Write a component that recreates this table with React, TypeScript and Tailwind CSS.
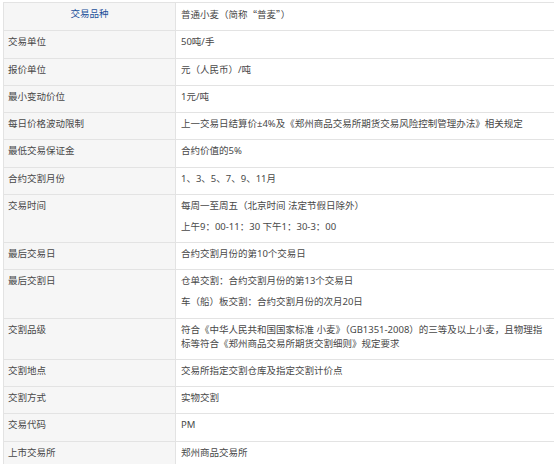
import React from "react";

type Row = { k: string; v: string[] };

const rows: Row[] = [
  { k: "交易单位", v: ["50吨/手"] },
  { k: "报价单位", v: ["元（人民币）/吨"] },
  { k: "最小变动价位", v: ["1元/吨"] },
  { k: "每日价格波动限制", v: ["上一交易日结算价±4%及《郑州商品交易所期货交易风险控制管理办法》相关规定"] },
  { k: "最低交易保证金", v: ["合约价值的5%"] },
  { k: "合约交割月份", v: ["1、3、5、7、9、11月"] },
  { k: "交易时间", v: ["每周一至周五（北京时间 法定节假日除外）", "上午9：00-11：30 下午1：30-3：00"] },
  { k: "最后交易日", v: ["合约交割月份的第10个交易日"] },
  { k: "最后交割日", v: ["仓单交割：合约交割月份的第13个交易日", "车（船）板交割：合约交割月份的次月20日"] },
  { k: "交割品级", v: ["符合《中华人民共和国国家标准 小麦》（GB1351-2008）的三等及以上小麦，且物理指标等符合《郑州商品交易所期货交割细则》规定要求"] },
  { k: "交割地点", v: ["交易所指定交割仓库及指定交割计价点"] },
  { k: "交割方式", v: ["实物交割"] },
  { k: "交易代码", v: ["PM"] },
  { k: "上市交易所", v: ["郑州商品交易所"] },
];

export default function App() {
  return (
    <div
      className="w-[554px] h-[464px] overflow-hidden bg-white pt-[2px] pl-[3px]"
      style={{ fontFamily: '"Noto Sans", "Noto Sans CJK SC", sans-serif' }}
    >
      <table className="border-collapse w-[560px] text-[9.5px] leading-[14px] text-[#484848]">
        <tbody>
          <tr>
            <td className="w-[172px] bg-[#f6f6f6] border border-[#e3e3e3] px-[4px] pt-[4px] pb-[8.25px] text-center text-[#22509a] align-top">
              交易品种
            </td>
            <td className="border border-[#e3e3e3] pl-[5px] pr-[15px] pt-[4px] pb-[8.25px] align-top">
              <span style={{ fontFamily: '"Noto Sans CJK SC", sans-serif' }}>普通小麦（简称“普麦”）</span>
            </td>
          </tr>
          {rows.map((r) => (
            <tr key={r.k}>
              <td className="w-[172px] bg-[#f6f6f6] border border-[#e3e3e3] px-[4px] pt-[4px] pb-[8.25px] align-top">
                {r.k}
              </td>
              <td className="border border-[#e3e3e3] pl-[5px] pr-[15px] pt-[4px] pb-[8.25px] align-top">
                <div className="flex flex-col gap-[7px]">
                  {r.v.map((t) => (
                    <p key={t}>{t}</p>
                  ))}
                </div>
              </td>
            </tr>
          ))}
        </tbody>
      </table>
    </div>
  );
}
